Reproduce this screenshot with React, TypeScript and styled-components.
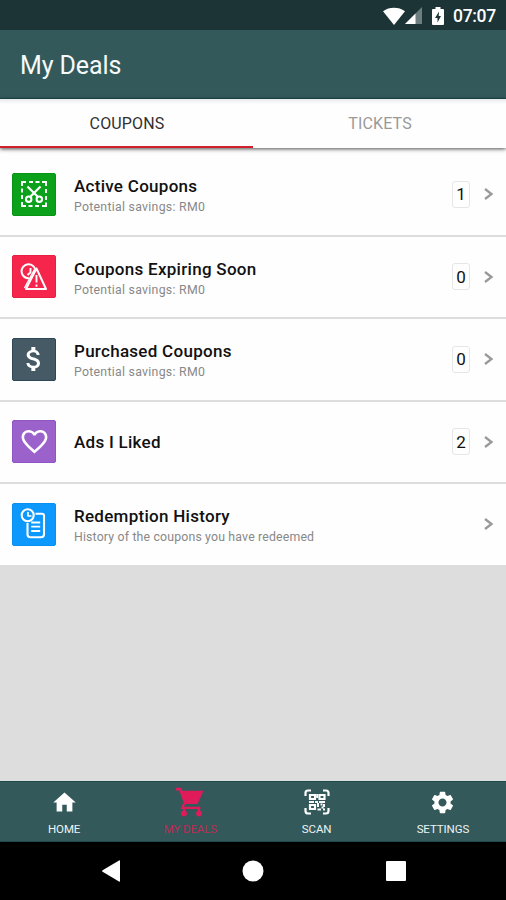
import React from "react";
import styled, { createGlobalStyle } from "styled-components";
import {
  MdHome,
  MdSettings,
  MdAttachMoney,
  MdFavoriteBorder,
} from "react-icons/md";

const GlobalStyle = createGlobalStyle`
  *, *::before, *::after { box-sizing: border-box; }
  body { margin: 0; font-family: Roboto, "Liberation Sans", sans-serif; }
  svg { display: block; flex: none; }
`;

const Screen = styled.div`
  width: 506px;
  height: 900px;
  display: flex;
  flex-direction: column;
  background: #dddddd;
  overflow: hidden;
`;

const StatusBar = styled.header`
  height: 30px;
  flex: none;
  display: flex;
  align-items: center;
  justify-content: flex-end;
  padding: 1px 10px 0 0;
  background: #1c3435;
  color: #fff;
`;

const BatteryGap = styled.div`
  margin-left: 10px;
`;

const Clock = styled.span`
  width: 43px;
  margin-left: 9px;
  font-size: 17.5px;
  line-height: 20px;
  font-weight: 500;
  letter-spacing: -0.3px;
  white-space: nowrap;
`;

const AppBar = styled.div`
  height: 69px;
  flex: none;
  display: flex;
  align-items: center;
  padding: 4px 20px 0;
  background: #33595a;
  border-bottom: 1px solid #1f4b4d;
`;

const Title = styled.h1`
  margin: 0;
  color: #f7fafa;
  font-size: 25px;
  line-height: 30px;
  font-weight: 400;
  letter-spacing: -0.1px;
`;

const Tabs = styled.nav`
  height: 49px;
  flex: none;
  display: flex;
  position: relative;
  z-index: 1;
  background: linear-gradient(#e6e9ec, #fefefe 5px);
  box-shadow: 0 1px 4px rgba(0, 0, 0, 0.7);
`;

const Tab = styled.div<{ $active?: boolean }>`
  flex: 1;
  display: flex;
  align-items: center;
  justify-content: center;
  border-bottom: 2px solid ${(p) => (p.$active ? "#d0202c" : "transparent")};
  color: ${(p) => (p.$active ? "#303030" : "#999")};
  font-size: 16px;
  line-height: 20px;
  padding: 3px 0 0 1px;
  letter-spacing: 0.15px;
`;

const List = styled.main`
  flex: 1;
  padding-top: 6px;
  background: linear-gradient(#fefefe, #fefefe) 0 0 / 100% 6px no-repeat;
`;

const Row = styled.div`
  height: 82.5px;
  display: flex;
  align-items: center;
  padding: 0 12px;
  background: #fefefe;
  border-bottom: 2px solid #dddddd;
`;

const IconTile = styled.div<{ $color: string; $edge: string }>`
  width: 44px;
  height: 43px;
  flex: none;
  display: flex;
  align-items: center;
  justify-content: center;
  border: 1px solid ${(p) => p.$edge};
  border-radius: 2px;
  background: ${(p) => p.$color};
  color: #fff;
`;

const Labels = styled.div<{ $single: boolean }>`
  flex: 1;
  margin-left: 18px;
  padding-top: ${(p) => (p.$single ? "1px" : "3px")};
`;

const RowTitle = styled.div`
  color: #111;
  font-size: 17px;
  line-height: 21px;
  font-weight: 500;
  letter-spacing: 0.28px;
  white-space: nowrap;
`;

const RowNote = styled.div<{ $wide: boolean }>`
  color: #888;
  font-size: 12.3px;
  line-height: 16px;
  margin-top: 2px;
  letter-spacing: ${(p) => (p.$wide ? "0.28px" : "0.17px")};
  white-space: nowrap;
`;

const Count = styled.div`
  width: 18px;
  height: 27px;
  display: flex;
  align-items: center;
  justify-content: center;
  border: 1.5px solid #e6e6e6;
  border-radius: 3px;
  color: #111;
  font-size: 17px;
  line-height: 20px;
`;

const Arrow = styled.svg`
  margin: 0 0 0 13px;
`;

const BottomNav = styled.nav`
  height: 61px;
  flex: none;
  display: flex;
  background: #33595a;
  border-top: 1px solid #21494b;
  border-bottom: 1px solid #21494b;
  padding-left: 1px;
`;

const NavItem = styled.div<{ $active?: boolean }>`
  flex: 1;
  display: flex;
  flex-direction: column;
  align-items: center;
  color: ${(p) => (p.$active ? "#e01b5a" : "#fff")};
`;

const NavIcon = styled.div`
  height: 40px;
  display: flex;
  align-items: center;
`;

const NavLabel = styled.span<{ $active?: boolean }>`
  font-size: 11.5px;
  line-height: 14px;
  color: ${(p) => (p.$active ? "#bd2c57" : "#eef4f4")};
  letter-spacing: -0.1px;
`;

const SystemBar = styled.footer`
  height: 58px;
  flex: none;
  display: flex;
  align-items: center;
  justify-content: space-between;
  padding: 0 100px 0 102px;
  background: #000;
`;

const WifiIcon = () => (
  <svg width="22" height="18" viewBox="0 0 22 18" fill="#fff">
    <path d="M0 4.2C6.4-.4 15.6-.4 22 4.2L11 18z" />
  </svg>
);

const SignalIcon = () => (
  <svg width="17" height="17" viewBox="0 0 17 17">
    <path d="M17 0v17H0z" fill="#6d7e7e" />
    <path d="M10.5 6.5V17H0z" fill="#fff" />
  </svg>
);

const BatteryIcon = () => (
  <svg width="12" height="18" viewBox="0 0 12 18">
    <path d="M3.5 0h5v2H11q1 0 1 1v14q0 1-1 1H1q-1 0-1-1V3q0-1 1-1h2.500z" fill="#fff" />
    <path d="M7 4.500L3 11h2.500v4.500L9 9H6.700z" fill="#1c3435" />
  </svg>
);

const CutIcon = () => (
  <svg width="28" height="28" viewBox="0 0 28 28" fill="none" stroke="currentColor" strokeWidth="1.900">
    <path d="M2 6V2h4M9 2h4M15.500 2h4M22 2h4v4M26 9v4M26 16v4M26 22.500V26h-4M19 26h-4M12.500 26h-4M6 26H2v-4M2 19v-4M2 12.500v-4" />
    <path d="M7.500 6.500L18 17M20.500 6.500L10 17" strokeWidth="2.200" />
    <circle cx="8.700" cy="19.200" r="2.700" strokeWidth="2.100" />
    <circle cx="19.300" cy="19.200" r="2.700" strokeWidth="2.100" />
  </svg>
);

const ExpiringIcon = () => (
  <svg width="28" height="28" viewBox="0 0 28 28" fill="none" stroke="currentColor" strokeWidth="2" strokeLinejoin="round">
    <path d="M9 15.300a7 7 0 1 1 6.500-8" />
    <path d="M16.500 5.500L26 26H6z" />
    <path d="M10.500 5v4.500L7.500 12M16.500 12v7.500M16.500 21.500v2.300" strokeWidth="1.900" />
    <path d="M14.500 6.500L4.500 25" strokeWidth="1.500" />
  </svg>
);

const HistoryIcon = () => (
  <svg width="28" height="32" viewBox="0 0 28 32" fill="none" stroke="currentColor" strokeWidth="2.100" strokeLinejoin="round">
    <circle cx="7.700" cy="7.300" r="6" />
    <path d="M8 4V8h3.500" strokeWidth="1.600" />
    <path d="M15.500 5.800h6.500q2 0 2 2v18.400q0 3-3 3H10.500q-3 0-3-3V15" />
    <path d="M11.200 14.500h9M11.200 18.700h9M11.200 23h9" strokeWidth="1.800" />
  </svg>
);

const CartIcon = () => (
  <svg width="30" height="30" viewBox="0 0 30 30" fill="currentColor">
    <path d="M1 .8h5l1.500 3H28.500L22.500 17H9.200L4.300 3.600H1z" />
    <path d="M9.200 16.500L7.300 20.800H25.500" fill="none" stroke="currentColor" strokeWidth="2.200" />
    <circle cx="9" cy="26.500" r="2.900" />
    <circle cx="24" cy="26.500" r="2.900" />
    <path d="M9 21v5M24 21v5" stroke="currentColor" strokeWidth="2" />
  </svg>
);

const ScanIcon = () => (
  <svg width="26" height="26" viewBox="0 0 26 26" fill="none" stroke="currentColor" strokeWidth="2.200">
    <path d="M1.500 7V4q0-2.500 2.500-2.500h3M19 1.500h3q2.500 0 2.500 2.500v3M24.500 19v3q0 2.500-2.500 2.500h-3M7 24.500H4Q1.500 24.500 1.500 22v-3" />
    <path d="M6 6h5v4H6zM15.500 6h5v4h-5zM6 16h5v4H6z" strokeWidth="2.200" />
    <path d="M5 13h5M11 13h3M15 13h6M13.200 5v4M14 14v4M16.500 15.500h2M20 15v3M13.500 20.500h3.500M17.500 18.500h2M19 20.500h2" strokeWidth="2" />
  </svg>
);

const rows = [
  { title: "Active Coupons", note: "Potential savings: RM0", count: "1", color: "#0ba11b", edge: "#099315", icon: <CutIcon /> },
  { title: "Coupons Expiring Soon", note: "Potential savings: RM0", count: "0", color: "#f5254c", edge: "#e91f42", icon: <ExpiringIcon /> },
  { title: "Purchased Coupons", note: "Potential savings: RM0", count: "0", color: "#455a64", edge: "#2d4756", icon: <MdAttachMoney size={32} /> },
  { title: "Ads I Liked", count: "2", color: "#9b62cc", edge: "#8f55c2", icon: <MdFavoriteBorder size={31} /> },
  { title: "Redemption History", note: "History of the coupons you have redeemed", color: "#0d98fd", edge: "#0990f3", icon: <HistoryIcon /> },
];

const navItems = [
  { label: "HOME", icon: <MdHome size={27} /> },
  { label: "MY DEALS", icon: <CartIcon />, active: true },
  { label: "SCAN", icon: <ScanIcon /> },
  { label: "SETTINGS", icon: <MdSettings size={27} /> },
];

export default function App() {
  return (
    <Screen>
      <GlobalStyle />
      <StatusBar>
        <WifiIcon />
        <SignalIcon />
        <BatteryGap>
          <BatteryIcon />
        </BatteryGap>
        <Clock>07:07</Clock>
      </StatusBar>
      <AppBar>
        <Title>My Deals</Title>
      </AppBar>
      <Tabs>
        <Tab $active>COUPONS</Tab>
        <Tab>TICKETS</Tab>
      </Tabs>
      <List>
        {rows.map((r) => (
          <Row key={r.title}>
            <IconTile $color={r.color} $edge={r.edge}>
              {r.icon}
            </IconTile>
            <Labels $single={!r.note}>
              <RowTitle>{r.title}</RowTitle>
              {r.note && <RowNote $wide={!!r.count}>{r.note}</RowNote>}
            </Labels>
            {r.count && <Count>{r.count}</Count>}
            <Arrow width="11" height="14" viewBox="0 0 11 14" fill="none" stroke="#999" strokeWidth="2.300">
              <path d="M2 2L8.500 7L2 12" />
            </Arrow>
          </Row>
        ))}
      </List>
      <BottomNav>
        {navItems.map((n) => (
          <NavItem key={n.label} $active={n.active}>
            <NavIcon>{n.icon}</NavIcon>
            <NavLabel $active={n.active}>{n.label}</NavLabel>
          </NavItem>
        ))}
      </BottomNav>
      <SystemBar>
        <svg width="18" height="22" viewBox="0 0 18 22" fill="#fff">
          <path d="M18 1v20q0 1-1 .500L.6 11.800q-.9-.8 0-1.600L17 .5q1-.5 1 .5z" />
        </svg>
        <svg width="22" height="22" viewBox="0 0 22 22" fill="#fff">
          <circle cx="11" cy="11" r="10.500" />
        </svg>
        <svg width="20" height="20" viewBox="0 0 20 20" fill="#fff">
          <rect width="20" height="20" rx="1" />
        </svg>
      </SystemBar>
    </Screen>
  );
}
